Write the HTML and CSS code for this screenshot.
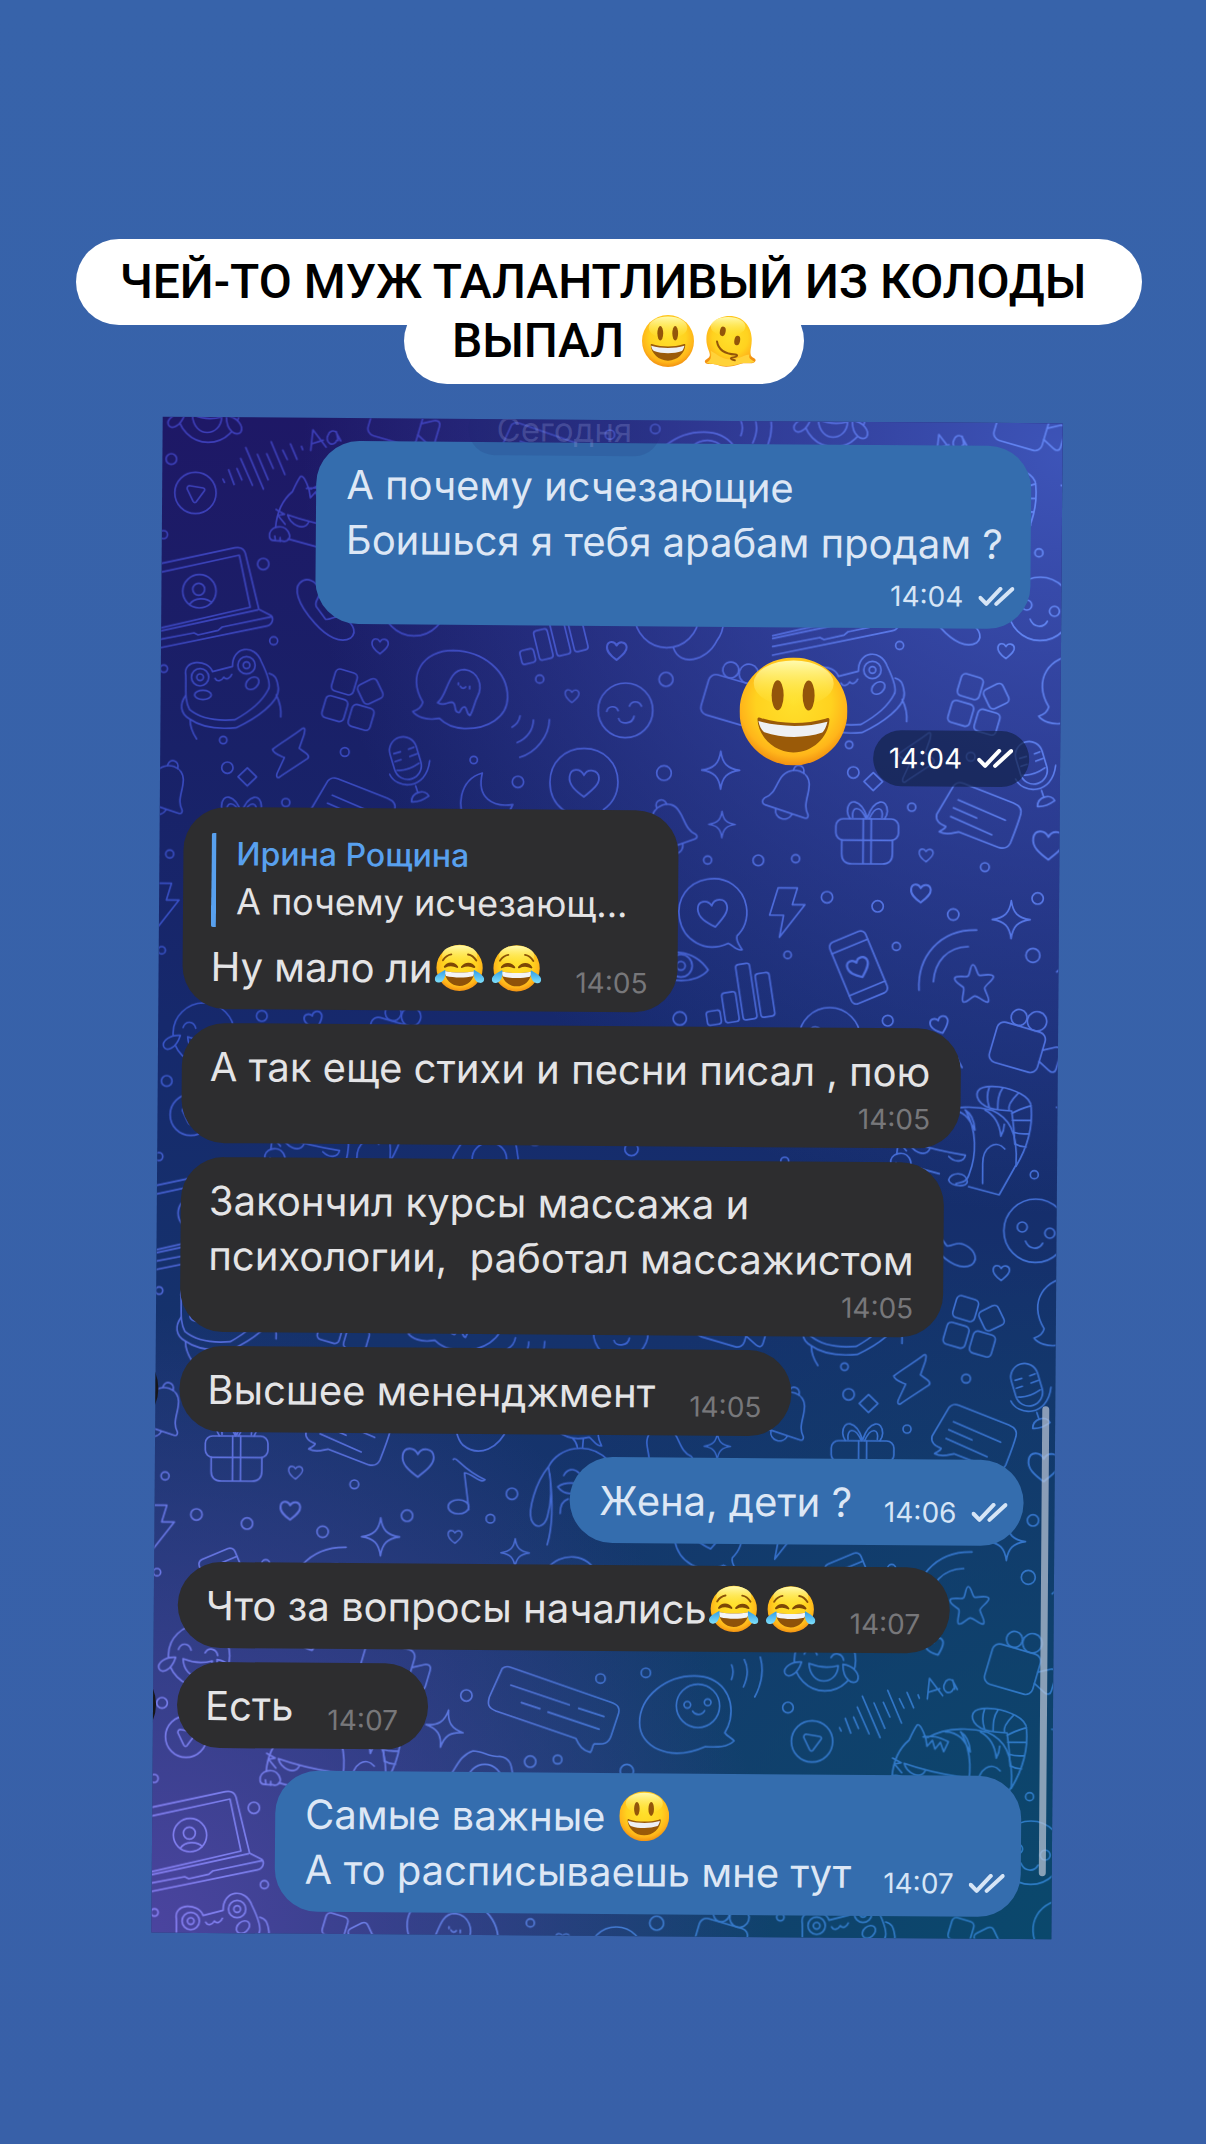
FILE: index.html
```
<!DOCTYPE html>
<html lang="ru">

<head>
    <meta charset="UTF-8">
    <meta name="viewport" content="width=device-width, initial-scale=1.0">
    <link rel="stylesheet" href="styles.css">
    <title>Чат</title>
</head>

<body>

    <!-- Shared icons -->
    <svg class="defs" aria-hidden="true">
        <defs>
            <radialGradient id="skin" cx="50%" cy="42%" r="58%">
                <stop offset="0" stop-color="#ffe02c" />
                <stop offset=".6" stop-color="#ffd21f" />
                <stop offset=".85" stop-color="#ffb51a" />
                <stop offset="1" stop-color="#f29112" />
            </radialGradient>
            <linearGradient id="shine" x1="0" y1="0" x2="0" y2="1">
                <stop offset="0" stop-color="#fffbb0" />
                <stop offset="1" stop-color="#fff04a" stop-opacity="0" />
            </linearGradient>
            <linearGradient id="tear" x1="0" y1="0" x2="0" y2="1">
                <stop offset="0" stop-color="#2f9be6" />
                <stop offset="1" stop-color="#7fe0fb" />
            </linearGradient>

            <symbol id="grin" viewBox="0 0 108 108">
                <circle cx="54" cy="54" r="54" fill="url(#skin)" />
                <ellipse cx="54" cy="26" rx="40" ry="23" fill="url(#shine)" />
                <ellipse cx="38" cy="38" rx="6" ry="15" fill="#93550a" />
                <ellipse cx="69" cy="38" rx="6" ry="15" fill="#93550a" />
                <path d="M18 62c0-2 2-2 4-1 20 6 44 6 64 0 2-1 4-1 4 1-1 18-17 33-36 33S19 80 18 62z" fill="#9a5a08" />
                <path d="M19 64c22 6 48 6 69 0-1 5-3 9-5 11-17 6-41 6-58 0-3-2-5-6-6-11z" fill="#eef0f3" />
            </symbol>

            <symbol id="joy" viewBox="0 0 108 108">
                <circle cx="54" cy="54" r="50" fill="url(#skin)" />
                <ellipse cx="54" cy="27" rx="38" ry="22" fill="url(#shine)" />
                <path d="M18 38c5-8 11-12 18-13M90 38c-5-8-11-12-18-13" fill="none" stroke="#8a5208" stroke-width="4" stroke-linecap="round" />
                <path d="M22 52c6-10 20-10 27 0-8-4-19-4-27 0zM59 52c7-10 21-10 27 0-8-4-19-4-27 0z" fill="#7d4706" stroke="#7d4706" stroke-width="4" stroke-linejoin="round" />
                <path d="M22 61c20 4 44 4 64 0 0 18-14 32-32 32S22 79 22 61z" fill="#8f5209" />
                <path d="M22 61c20 4 44 4 64 0 0 4-1 8-3 11-17 4-41 4-58 0-2-3-3-7-3-11z" fill="#f3f4f6" />
                <path d="M23 58c2 15-3 27-13 28-9 1-12-8-7-14 4-5 11-9 20-14z" fill="url(#tear)" />
                <path d="M85 58c-2 15 3 27 13 28 9 1 12-8 7-14-4-5-11-9-20-14z" fill="url(#tear)" />
            </symbol>

            <symbol id="melt" viewBox="0 0 108 108">
                <path d="M53 2c27 0 45 20 46 46 1 16-4 24-2 34 1 8 12 7 10 13-3 9-17 3-30 6-18 6-34 9-48 3-10-4-24 1-27-6-2-6 9-7 10-14 1-8-8-18-7-36C6 21 26 2 53 2z" fill="url(#skin)" />
                <ellipse cx="50" cy="24" rx="36" ry="20" fill="url(#shine)" />
                <path d="M14 74c14 8 22 16 38 18 16 1 26-7 42-10-3 10 8 12 11 15-6 5-20 1-31 4-16 5-32 7-45 3-8-4-20-1-24-5 8-4 12-12 9-25z" fill="#ffd23a" />
                <ellipse cx="39" cy="34" rx="6" ry="10" fill="#93550a" transform="rotate(10 39 34)" />
                <ellipse cx="69" cy="53" rx="6" ry="10" fill="#93550a" transform="rotate(10 69 53)" />
                <path d="M27 55c3 18 18 26 38 27 6 1 5 5-4 6s-5 5 3 6" fill="none" stroke="#93550a" stroke-width="4" stroke-linecap="round" />
            </symbol>

            <symbol id="ticks" viewBox="0 0 36 20">
                <path d="M2 11l6 6L22 2M18 17L34 2" fill="none" stroke="currentColor" stroke-width="4" stroke-linecap="round" stroke-linejoin="round" />
            </symbol>
        </defs>
    </svg>

    <main class="story">
        <h1 class="title">
            <span class="title-line title-first">ЧЕЙ-ТО МУЖ ТАЛАНТЛИВЫЙ ИЗ КОЛОДЫ</span>
            <span class="title-line title-second">ВЫПАЛ
                <svg class="title-emoji" role="img" aria-label="😃"><use href="#grin" /></svg>
                <svg class="title-emoji" role="img" aria-label="🫠"><use href="#melt" /></svg>
            </span>
        </h1>

        <section class="chat">
            <svg class="wallpaper" aria-hidden="true">
                <defs>
                    <path id="heart" d="M0 24C-14 14-26 4-24-10-22-24-6-24 0-12 6-24 24-22 25-8 26 4 12 14 0 24z" />
                    <path id="spark" d="M0-57C5-20 20-5 57 0 20 5 5 20 0 57-5 20-20 5-57 0-20-5-5-20 0-57z" />
                    <path id="bolt" d="M-25-72h58l-15 50h38L-20 76l12-66h-42z" />
                    <g id="camera">
                        <rect x="-80" y="-55" width="150" height="125" rx="22" />
                        <circle cx="-25" cy="-80" r="24" />
                        <circle cx="30" cy="-84" r="29" />
                        <path d="M70-5l35-20c12-5 20 0 20 12v50c0 12-8 16-20 10L70 30" />
                    </g>
                    <g id="bell">
                        <path d="M-70 40c25-18 20-50 28-75 16-46 80-46 88 0 8 28 0 60 24 82 4 8 0 12-8 12H-62c-10 0-14-10-8-19z" />
                        <path d="M-28 60c4 30 46 30 52 0M-14-68c0-24 30-24 32 0" />
                    </g>
                    <g id="bars">
                        <rect x="-96" y="38" width="42" height="42" rx="9" />
                        <rect x="-42" y="-10" width="42" height="90" rx="9" />
                        <rect x="12" y="-88" width="42" height="168" rx="9" />
                        <rect x="66" y="-52" width="42" height="132" rx="9" />
                    </g>
                    <g id="loveBubble">
                        <path d="M30 98C-45 118-102 65-102 0-102-60-58-102 0-102S102-60 102-2c0 40-20 68-42 82-8 14 2 30 8 44-18 2-26-20-38-26z" />
                        <use href="#heart" transform="scale(1.8)" stroke-width="3" />
                    </g>

                    <!-- One tile of the doodle wallpaper -->
                    <g id="doodles">
                        <!-- laughing face, voice note, play button -->
                        <g transform="translate(200 38)">
                            <circle r="92" />
                            <path d="M-62-18c8-22 32-20 38 2M18-8c10-18 34-14 38 8M-48 10c30 12 60 14 88 6-2 60-84 66-88-6z" />
                            <path d="M-70 6c-30-2-56 16-50 34 8 16 36 8 50-34zM54 12c34 4 52 30 44 48-12 16-44 0-44-48z" fill="#000" />
                        </g>
                        <path d="M245 240l5 10M262 212l17 44M287 208l15 34M298 178l36 80M313 145l54 124M348 165l33 76M376 163l20 44M389 127l42 98M424 152l14 28M447 133l20 46M480 140l4 10" />
                        <path d="M508 152l6-62 40 52M511 132l34-11M590 122l-6-27M560 105a15 17 0 1 0 26 16M560 105a15 17 0 0 1 24-8l14 26" />
                        <circle cx="163" cy="282" r="62" />
                        <path d="M138 270c0-8 4-10 10-9l38 6c6 1 6 6 3 10l-22 30c-3 5-8 5-11 0z" />
                        <!-- sleeping cat -->
                        <path d="M532 442l-90-24M404 384c4-50 22-84 50-108 8-18 14-32 24-46 8-4 18 16 26 40l4 24 16-18 8 26 16-20 10 28 14-30c-30-16-46-18-76-14M510 268c60-36 140-28 178-18 50 22 80 62 74 164l-50 90-92-24" />
                        <path d="M562 250c50 0 64 40 76 60-2-30-10-48-30-60M668 250c26 14 44 38 48 78 8-14 10-24 10-36M610 252c34 60 34 130 12 190-8 30-30 24-40 30M662 470V410c0-50 40-74 66-44" />
                        <path d="M644 210c-6-30 30-34 66-30 40 6 96 26 96 60 6 60-10 120-44 178M644 210c10 36 60 40 104 42 6 40 8 60 10 100M680 182c-8 20-6 40 0 58M720 184c-14 20-14 40-14 62M766 200c-20 20-30 40-26 52M806 236c-20 6-40 12-58 24M806 280h-56M800 320c-20 2-34 0-46-4M792 360c-14 0-24-4-34-10" />
                        <path d="M440 346c40 14 104 30 170 40-4 20-30 24-50 4M440 346c8 30 50 50 64 20M405 330l26 14-20 4 22 26" />
                        <path d="M386 412c-4-30 40-42 56-16 14 26-8 32-20 28-20 0-34 2-36-12zM404 424l-2-14M418 426v-12M560 460c6-24 52-26 56 4 2 20-52 16-56-4z" />
                        <!-- laptop -->
                        <path d="M10 506l272-60c20-4 28 4 32 16l42 168 36 18c10 8 6 28-12 32L20 756M10 532l286-64 34 156L20 698M352 632L20 706M20 730l142-28 12 6 60-14 12-10 148-32" />
                        <circle cx="177" cy="577" r="50" />
                        <circle cx="175" cy="571" r="18" />
                        <path d="M148 617c14-22 50-22 66-6" />
                        <!-- handset, smiley, planet -->
                        <path d="M478 550c20-20 50-8 58 20 8 24-16 30-8 50l28 38c14 4 26-12 46-6 30 10 54 40 30 62-30 18-72-4-108-44-56-60-62-104-46-120z" />
                        <circle cx="822" cy="611" r="95" />
                        <circle cx="782" cy="600" r="15" />
                        <circle cx="865" cy="618" r="15" />
                        <path d="M792 642c10 26 40 28 52 6" />
                        <circle cx="1580" cy="640" r="96" />
                        <path d="M1600 735c20 60 100 40 130-20 30-40 20-80 10-110" />
                        <!-- frog -->
                        <path d="M138 830c-10-50 66-50 80-12l60-16c-2-60 66-70 86-16 20 40 30 70 22 84-20 40-60 70-100 92-50 4-100 0-136-30-16-30-10-60-12-102z" />
                        <path d="M138 890c-18 26-16 54 12 70 40 28 100 30 140 26 60-28 130-78 126-120-4-30-10-40-28-44M152 962c0 20 8 40 20 58M410 886c10 20 16 40 14 66M226 838c6 12 20 8 26-4 6 10 20 4 24-8" />
                        <circle cx="181" cy="835" r="26" />
                        <circle cx="181" cy="835" r="10" />
                        <circle cx="320" cy="798" r="26" />
                        <circle cx="320" cy="798" r="10" />
                        <ellipse cx="190" cy="888" rx="25" ry="14" />
                        <ellipse cx="338" cy="852" rx="22" ry="16" transform="rotate(-40 338 852)" />
                        <!-- blocks -->
                        <rect x="580" y="812" width="68" height="68" rx="14" transform="rotate(16 614 846)" />
                        <rect x="660" y="842" width="64" height="64" rx="14" transform="rotate(-26 692 874)" />
                        <rect x="552" y="892" width="68" height="68" rx="14" transform="rotate(16 586 926)" />
                        <rect x="631" y="918" width="68" height="68" rx="14" transform="rotate(16 665 952)" />
                        <!-- ghost in a bubble -->
                        <path d="M850 905c-50-80 0-156 90-156 90 2 164 60 164 140 0 60-60 96-130 94-40-2-60-16-74-30-40 8-70-6-80-20 14-4 26-12 30-28z" />
                        <path d="M894 906c30-20 28-100 80-100 44 6 56 50 40 80-10 20-12 40-22 58-12-4-8-22-16-26-14-2-10 22-22 16-12-4-2-26-16-30-18 0-22 14-44 2zM956 846v6M962 856c4 8 12 8 16 2M990 856v8" />
                        <use href="#bars" transform="translate(1222 690) rotate(-14)" />
                        <path d="M1142 944c-2 12-10 26-24 34M1182 956c0 30-20 56-48 68M1230 954c0 50-40 100-88 114" />
                        <circle cx="1458" cy="925" r="82" />
                        <path d="M1402 928c4-18 28-18 34-2M1470 912c6-18 30-16 36 0M1438 950c4 18 42 18 46-8" />
                        <use href="#camera" transform="translate(1775 885) rotate(16)" />
                        <!-- bolt, mic, moon, bells -->
                        <path d="M400 1050c24-20 60-40 90-64 10-4 6 10 4 20l-14 40c10 8 36 20 26 30-20 14-70 46-86 58-8 2-8-6-6-12l22-48c-14-6-32-10-36-24z" />
                        <rect x="758" y="1008" width="82" height="130" rx="41" transform="rotate(-17 799 1073)" />
                        <path d="M764 1060l20-6M768 1084l18-6M774 1110c20 2 46-8 66-22M808 1046l16-6M812 1068l22-8M752 1122c20 44 110 50 120-42M830 1156l6 18M818 1204c0-30 40-40 52-18-14 10-32 20-52 18z" />
                        <path d="M1030 1116c-70 20-80 110-44 150 50 40 110 10 136-56-60 10-110-20-92-94z" />
                        <use href="#loveBubble" transform="translate(1335 1142)" />
                        <use href="#spark" transform="translate(1745 1102)" />
                        <use href="#bell" transform="translate(78 1168) rotate(18)" />
                        <use href="#bell" transform="translate(1590 1275) rotate(-20)" />
                        <path d="M325 1106l28 27-28 27-28-27z" />
                        <!-- gift -->
                        <rect x="214" y="1245" width="188" height="64" rx="22" />
                        <path d="M232 1310v40c0 20 12 30 30 30h92c18 0 30-10 30-30v-40M296 1245v134M320 1245v134M308 1242c-20-60-60-60-60-20 0 10 4 16 8 22M308 1242c20-60 60-60 60-20 0 10-4 16-8 22M304 1244c-20-44-44-34-40-4M314 1244c20-44 44-34 38-4" />
                        <!-- message bubble -->
                        <path d="M566 1144c10-12 18-12 30-8l150 58c18 8 26 16 22 34-8 30-20 60-30 86-8 16-20 18-34 14l-122-46c-20 4-38 10-58 0 6-6 18-8 20-16-22-8-32-18-28-36zM580 1186l142 60M566 1210l70 30M558 1236l124 54" />
                        <use href="#heart" transform="translate(852 1318) scale(1.9)" stroke-width="3" />
                        <path d="M958 1310c10-12 26 30 96 60-10 16-40-20-62-20l14 110" />
                        <ellipse cx="975" cy="1452" rx="31" ry="21" />
                        <!-- dog -->
                        <path d="M1244 1330c30-60 120-80 180-20M1244 1330c-40 50-60 130-50 160 14 30 40 20 48-10 14-50 10-110 2-150zM1248 1350c10 80 10 160-6 214M1330 1270c-2-14-8-20-14-26M1346 1270l2-24M1290 1356c10-20 30-24 46-8M1272 1390c20 26 50 26 80 0-20-16-60-16-80 0M1280 1470c0-30 10-40 24-44M1424 1310c60 60 70 120 60 180-20 20-40-20-46-60" />
                        <use href="#spark" transform="translate(1750 1265) scale(.7)" stroke-width="6" />
                        <use href="#loveBubble" transform="translate(1725 1530) rotate(-10)" />
                        <use href="#bolt" transform="translate(67 1526)" />
                        <use href="#spark" transform="translate(742 1544)" />
                        <use href="#spark" transform="translate(1146 1589) scale(.75)" stroke-width="6" />
                        <!-- phone -->
                        <g transform="translate(285 1691) rotate(-23)">
                            <rect x="-58" y="-100" width="116" height="200" rx="16" />
                            <path d="M-58-68H58M-58 68H58" />
                            <use href="#heart" transform="scale(1.3)" />
                        </g>
                        <path d="M467 1758c-6-100 60-184 172-182M510 1732c4-60 40-104 104-106" />
                        <path d="M628 1680c10 0 12 30 20 32 10 0 40-8 42 4 0 10-26 26-26 34 0 10 20 36 10 42-12 2-30-20-40-18-10 2-22 22-34 18-8-8 6-36 0-44-6-6-30-16-26-28 6-10 34 0 40-6 6-4 6-34 14-34z" />
                        <path d="M1540 1690c40-60 130-50 172 12-30 40-130 50-172-12z" />
                        <circle cx="1630" cy="1690" r="34" />
                        <circle cx="1630" cy="1690" r="13" />
                        <use href="#bars" transform="translate(1795 1775) rotate(-9)" />
                        <use href="#camera" transform="translate(770 55) rotate(16)" />
                        <!-- wide bubble, egg, astronaut -->
                        <path d="M1110 70c10-8 18-6 30-2l294 100c24 8 30 16 26 34l-22 68c-8 24-22 26-50 24-8 6-4 18-12 26-24-6-34-20-44-42l-240-80c-24-10-26-20-20-42zM1136 120l176 58M1340 188l76 24M1168 172l56 18M1248 200l154 50" />
                        <path d="M958 390c20-30 30-60 66-72 30 0 50 20 80 16 40 4 36 40 42 70 8 60-90 90-150 70-40-20-60-50-38-84z" />
                        <circle cx="1060" cy="410" r="52" />
                        <path d="M1523 230c0-80 80-142 164-142 80 0 120 60 108 130-4 20-10 30-16 40 6 10 20 14 28 24-20 20-50 20-86 18-110 50-198 0-198-70z" />
                        <circle cx="1698" cy="178" r="65" />
                        <circle cx="1666" cy="175" r="10" />
                        <circle cx="1727" cy="167" r="10" />
                        <path d="M1682 194c8 14 30 12 36-2M1798 54c6 14 6 28 0 44M1836 38c16 30 10 56-2 82M1884 30c14 50 0 90-16 120" />
                        <path d="M1240 1640c40-60 130-50 150 10M1240 1640c-30 70 0 130 60 150M1330 1700l60 90M880 1700c60-60 120-40 170 10M890 1780l110-50 60 70z" />
                        <use href="#spark" transform="translate(938 252) rotate(12)" />
                        <!-- small hearts -->
                        <use href="#heart" transform="translate(720 737)" />
                        <use href="#heart" transform="translate(1430 745) scale(1.2)" />
                        <use href="#heart" transform="translate(1297 882) scale(.85)" />
                        <use href="#heart" transform="translate(470 1466) scale(1.2)" />
                        <use href="#heart" transform="translate(485 1352) scale(.85)" />
                        <use href="#heart" transform="translate(965 1541) scale(.85)" />
                        <use href="#heart" transform="translate(530 1861) scale(1.1) rotate(-20)" />
                        <!-- bubbles -->
                        <circle cx="90" cy="181" r="16" />
                        <circle cx="68" cy="408" r="12" />
                        <circle cx="368" cy="494" r="17" />
                        <circle cx="401" cy="724" r="12" />
                        <circle cx="72" cy="810" r="11" />
                        <circle cx="817" cy="443" r="12" />
                        <circle cx="1200" cy="833" r="12" />
                        <circle cx="1405" cy="98" r="14" />
                        <circle cx="1541" cy="80" r="14" />
                        <circle cx="1579" cy="831" r="21" />
                        <circle cx="1486" cy="375" r="20" />
                        <circle cx="1003" cy="152" r="17" />
                        <circle cx="1196" cy="349" r="17" />
                        <circle cx="1278" cy="342" r="13" />
                        <circle cx="252" cy="1023" r="11" />
                        <circle cx="617" cy="1056" r="13" />
                        <circle cx="1004" cy="1077" r="11" />
                        <circle cx="1137" cy="1142" r="17" />
                        <circle cx="265" cy="1106" r="17" />
                        <circle cx="441" cy="1209" r="12" />
                        <circle cx="1575" cy="1112" r="22" />
                        <circle cx="1708" cy="1372" r="12" />
                        <circle cx="1860" cy="1372" r="16" />
                        <circle cx="94" cy="1366" r="12" />
                        <circle cx="189" cy="1481" r="17" />
                        <circle cx="341" cy="1507" r="17" />
                        <circle cx="662" cy="1387" r="13" />
                        <circle cx="568" cy="1530" r="17" />
                        <circle cx="821" cy="1480" r="17" />
                        <circle cx="72" cy="1655" r="11" />
                        <circle cx="398" cy="1627" r="12" />
                        <circle cx="808" cy="1651" r="21" />
                        <circle cx="1135" cy="1412" r="17" />
                        <circle cx="1071" cy="1487" r="13" />
                        <circle cx="1628" cy="1848" r="20" />
                        <circle cx="374" cy="1850" r="16" />
                    </g>

                    <pattern id="tile" patternUnits="userSpaceOnUse" width="1878" height="1866" patternTransform="translate(-21 -18) scale(.3333)">
                        <g fill="none" stroke="#fff" stroke-width="5" stroke-linecap="round" stroke-linejoin="round">
                            <use href="#doodles" />
                            <use href="#doodles" x="1878" />
                            <use href="#doodles" x="-1878" />
                            <use href="#doodles" y="1866" />
                            <use href="#doodles" y="-1866" />
                        </g>
                    </pattern>
                    <mask id="lines">
                        <rect width="100%" height="100%" fill="url(#tile)" />
                    </mask>
                    <linearGradient id="lineBase" x1="0" y1="0" x2="0" y2="1">
                        <stop offset="0" stop-color="#3d3eb8" />
                        <stop offset=".5" stop-color="#3558c8" />
                        <stop offset="1" stop-color="#3f7ad0" />
                    </linearGradient>
                    <radialGradient id="lineTop" cx="100%" cy="8%" r="75%">
                        <stop offset="0" stop-color="#668cf8" />
                        <stop offset="1" stop-color="#668cf8" stop-opacity="0" />
                    </radialGradient>
                    <radialGradient id="lineLeft" cx="0%" cy="100%" r="60%">
                        <stop offset="0" stop-color="#8a80f4" />
                        <stop offset="1" stop-color="#8a80f4" stop-opacity="0" />
                    </radialGradient>
                    <radialGradient id="lineRight" cx="100%" cy="100%" r="60%">
                        <stop offset="0" stop-color="#2b7cc4" />
                        <stop offset="1" stop-color="#2b7cc4" stop-opacity="0" />
                    </radialGradient>
                </defs>
                <g mask="url(#lines)">
                    <rect width="100%" height="100%" fill="url(#lineBase)" />
                    <rect width="100%" height="100%" fill="url(#lineTop)" />
                    <rect width="100%" height="100%" fill="url(#lineLeft)" />
                    <rect width="100%" height="100%" fill="url(#lineRight)" />
                </g>
            </svg>

            <div class="message out stacked">
                <p class="text">А почему исчезающие<br>Боишься я тебя арабам продам ?</p>
                <span class="time">14:04 <svg class="ticks" role="img" aria-label="Прочитано"><use href="#ticks" /></svg></span>
            </div>

            <div class="sticker">
                <svg class="sticker-emoji" role="img" aria-label="😃"><use href="#grin" /></svg>
                <span class="time time-pill">14:04 <svg class="ticks" role="img" aria-label="Прочитано"><use href="#ticks" /></svg></span>
            </div>

            <div class="message in quoted">
                <blockquote class="quote">
                    <span class="quote-name">Ирина Рощина</span>
                    <span class="quote-text">А почему исчезающ...</span>
                </blockquote>
                <div class="line">
                    <p class="text">Ну мало ли<svg class="emoji" role="img" aria-label="😂"><use href="#joy" /></svg><svg class="emoji" role="img" aria-label="😂"><use href="#joy" /></svg></p>
                    <span class="time">14:05</span>
                </div>
            </div>

            <div class="message in stacked">
                <p class="text">А так еще стихи и песни писал , пою</p>
                <span class="time">14:05</span>
            </div>

            <div class="message in stacked">
                <p class="text">Закончил курсы массажа и<br>психологии,&nbsp; работал массажистом</p>
                <span class="time">14:05</span>
            </div>

            <div class="row">
                <span class="avatar"></span>
                <div class="message in line">
                    <p class="text">Высшее мененджмент</p>
                    <span class="time">14:05</span>
                </div>
            </div>

            <div class="message out line">
                <p class="text">Жена, дети ?</p>
                <span class="time">14:06 <svg class="ticks" role="img" aria-label="Прочитано"><use href="#ticks" /></svg></span>
            </div>

            <div class="message in line">
                <p class="text">Что за вопросы начались<svg class="emoji" role="img" aria-label="😂"><use href="#joy" /></svg><svg class="emoji" role="img" aria-label="😂"><use href="#joy" /></svg></p>
                <span class="time">14:07</span>
            </div>

            <div class="row">
                <span class="avatar"></span>
                <div class="message in line">
                    <p class="text">Есть</p>
                    <span class="time">14:07</span>
                </div>
            </div>

            <div class="message out line">
                <p class="text">Самые важные <svg class="emoji" role="img" aria-label="😃"><use href="#grin" /></svg><br>А то расписываешь мне тут</p>
                <span class="time">14:07 <svg class="ticks" role="img" aria-label="Прочитано"><use href="#ticks" /></svg></span>
            </div>

            <span class="day">Сегодня</span>
            <span class="scrollbar"></span>
        </section>
    </main>

</body>

</html>
```

FILE: styles.css
```
* {
    box-sizing: border-box;
}

body {
    margin: 0;
    min-height: 100vh;
    background: linear-gradient(#3763aa, #3860a8);
    font-family: Inter, "Noto Sans", sans-serif;
}

.defs {
    position: absolute;
    width: 0;
    height: 0;
}

.story {
    padding: 239px 149px 204px 157px;
}

/* Title sticker */
.title {
    display: flex;
    flex-direction: column;
    align-items: center;
    margin: 0 -84px 36px -80px;
    font-family: Roboto, sans-serif;
    font-size: 48px;
    font-weight: 500;
    line-height: 86px;
    color: #000;
    white-space: nowrap;
}

.title-line {
    height: 86px;
    border-radius: 43px;
    background: #fff;
}

.title-first {
    padding: 0 56px 0 44px;
}

.title-second {
    display: flex;
    align-items: center;
    gap: 10px;
    margin-top: -27px;
    margin-right: 10px;
    padding: 0 48px;
}

.title-emoji {
    width: 52px;
    height: 52px;
}

.title-emoji:first-of-type {
    margin-left: 8px;
}

/* Chat */
.chat {
    position: relative;
    display: flex;
    flex-direction: column;
    gap: 14px;
    padding: 23px 31px 22px 24px;
    overflow: hidden;
    transform: rotate(0.43deg);
    background:
        radial-gradient(circle at 100% 2%, #3d54b8 0, transparent 760px),
        radial-gradient(circle at 0 100%, #4b449f 0, transparent 620px),
        radial-gradient(circle at 100% 100%, #0a486c 0, transparent 700px),
        linear-gradient(#1e1866 0, #192168 22%, #16296c 40%, #15326c 60%, #173a6c 100%);
}

.wallpaper {
    position: absolute;
    inset: 0;
    width: 100%;
    height: 100%;
}

.message {
    position: relative;
    align-self: flex-start;
    padding: 16px 30px 15px;
    border-radius: 43px;
    color: #e4e4e6;
    background: #2d2d2f;
}

.in {
    padding-left: 28px;
}

.out {
    align-self: flex-end;
    color: #dde7f5;
    background: #346dae;
}

.text {
    margin: 0;
    font-size: 40px;
    line-height: 55px;
}

.line {
    display: flex;
    align-items: flex-end;
    gap: 34px;
}

.out.line {
    gap: 32px;
    margin: 8px 0;
    padding-right: 16px;
}

.out.line:last-of-type {
    margin-bottom: 0;
}

.stacked {
    display: flex;
    flex-direction: column;
}

.stacked .time {
    align-self: flex-end;
    margin-top: 6px;
}

.out.stacked {
    padding-right: 28px;
    padding-bottom: 18px;
}

.out.stacked .time {
    margin-top: 11px;
    margin-right: -12px;
}

.time {
    display: flex;
    align-items: center;
    gap: 15px;
    font-size: 28px;
    line-height: 28px;
    color: #77777a;
}

.out .time {
    color: #d6e5f6;
}

.out.line .time {
    margin-bottom: 4px;
}

.ticks {
    width: 36px;
    height: 20px;
}

.emoji {
    width: 50px;
    height: 50px;
    margin-left: 2px;
    margin-right: 5px;
    vertical-align: -10px;
}

.emoji:last-child {
    margin-right: 0;
}

.sticker {
    position: relative;
    align-self: flex-end;
    display: flex;
    align-items: flex-end;
    gap: 26px;
    margin: 16px 0 12px;
}

.sticker-emoji {
    width: 108px;
    height: 108px;
    margin-bottom: 20px;
}

.time-pill {
    padding: 14px 16px;
    border-radius: 28px;
    color: #fff;
    background: rgba(18, 34, 74, 0.7);
}

.quoted {
    padding-top: 26px;
}

.quote {
    display: flex;
    flex-direction: column;
    margin: 0 0 12px;
    padding-left: 20px;
    border-left: 5px solid #58a0ee;
    border-radius: 2px;
}

.quote-name {
    font-size: 32px;
    font-weight: 500;
    line-height: 42px;
    color: #58a0ee;
}

.quote-text {
    font-size: 36px;
    line-height: 52px;
}

.row {
    position: relative;
    display: flex;
}

.avatar {
    position: absolute;
    left: -107px;
    top: 0;
    width: 86px;
    height: 86px;
    border-radius: 50%;
    background: #16161a;
}

/* Floating over the messages */
.day {
    position: absolute;
    top: -16px;
    left: 34%;
    padding: 4px 28px 4px;
    border-radius: 28px;
    font-size: 33px;
    line-height: 44px;
    color: rgba(160, 170, 230, 0.25);
    background: rgba(30, 40, 110, 0.15);
}

.scrollbar {
    position: absolute;
    right: 6px;
    bottom: 63px;
    width: 7px;
    height: 31%;
    border-radius: 4px;
    background: rgba(190, 200, 215, 0.7);
}
```
